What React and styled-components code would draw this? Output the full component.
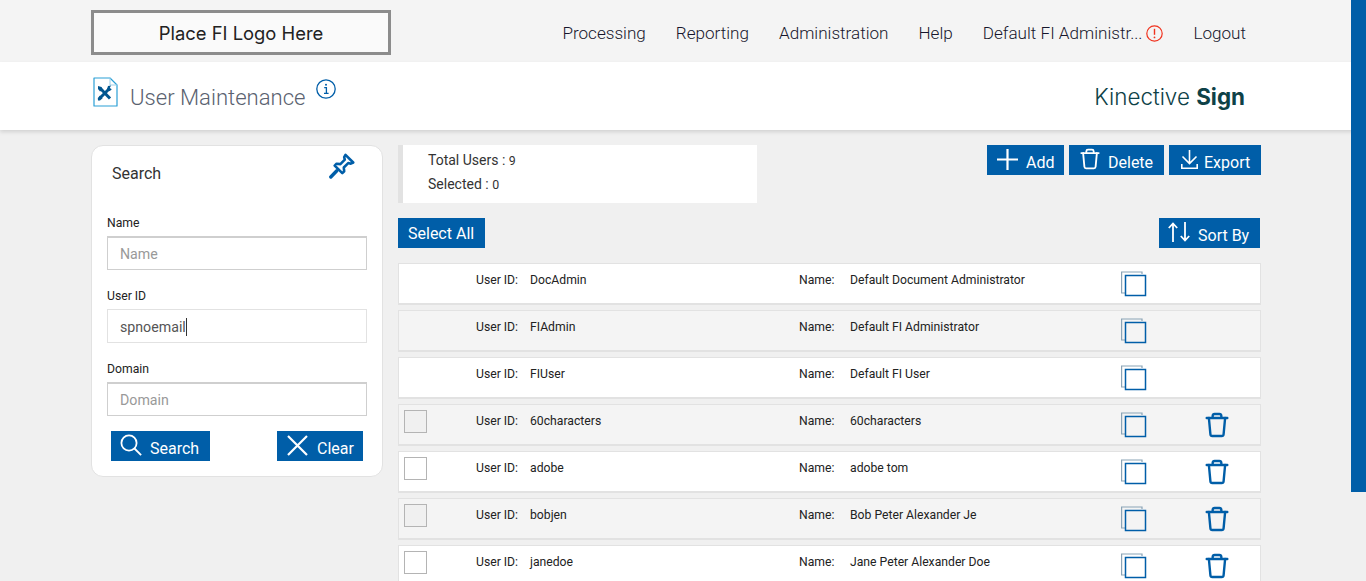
import React from 'react'
import styled, { createGlobalStyle } from 'styled-components'

const BLUE = '#005ea8'

const GlobalStyle = createGlobalStyle`
    html, body {
        margin: 0;
        height: 581px;
        overflow: hidden;
        background: #f0f0f0;
        font-family: Roboto, "Liberation Sans", sans-serif;
    }
    * { box-sizing: border-box; }
`

const users = [
    { id: 'DocAdmin', name: 'Default Document Administrator', system: true },
    { id: 'FIAdmin', name: 'Default FI Administrator', system: true },
    { id: 'FIUser', name: 'Default FI User', system: true },
    { id: '60characters', name: '60characters' },
    { id: 'adobe', name: 'adobe tom' },
    { id: 'bobjen', name: 'Bob Peter Alexander Je' },
    { id: 'janedoe', name: 'Jane Peter Alexander Doe' },
]

const TrashIcon = ({ size = 24, color = BLUE, width = 2.2 }) => (
    <svg width={size} height={size} viewBox="0 0 24 24" fill="none" stroke={color} strokeWidth={width} strokeLinecap="round" strokeLinejoin="round">
        <path d="M2.5 5.5h19" />
        <path d="M8 5V3.5A1.8 1.8 0 0 1 9.8 1.8h4.4A1.8 1.8 0 0 1 16 3.5V5" />
        <path d="M4.5 5.5l1.4 15a1.8 1.8 0 0 0 1.8 1.7h8.6a1.8 1.8 0 0 0 1.8-1.7l1.4-15" />
    </svg>
)

const CopyIcon = () => (
    <svg width="26" height="27" viewBox="0 0 26 27" fill="none">
        <path d="M21 4V2H.6v21H4" stroke="#8aa3b6" strokeWidth="1.2" />
        <rect x="4.5" y="5.5" width="20" height="20" stroke={BLUE} strokeWidth="1.5" />
    </svg>
)

const DocIcon = () => (
    <svg width="25" height="30" viewBox="0 0 25 30" fill="none">
        <path d="M1 1h16l7 7v21H1z" stroke="#2a9fd6" strokeWidth="1.2" strokeLinejoin="round" />
        <path d="M17 1v7h7" stroke="#9ccfe8" strokeWidth="1" />
        <path d="M7 11l10 10.5" stroke="#00558f" strokeWidth="3" />
        <path d="M16 12L7 21" stroke="#00558f" strokeWidth="3" />
        <path d="M5 9l3.5 1 1 3-2.5 1.5L5 12z" fill="#00558f" />
        <path d="M14 12l1-3 3-.5-1.2 2.4 2 1.4-2.2 2z" fill="#00558f" />
        <path d="M4.8 21l2.2-2.4 2.6 2.6L7 23.6H5z" fill="#00558f" />
    </svg>
)

const InfoIcon = () => (
    <svg width="20" height="20" viewBox="0 0 20 20" fill="none">
        <circle cx="10" cy="10" r="9.2" stroke={BLUE} strokeWidth="1.3" />
        <circle cx="10" cy="5.8" r="1" fill={BLUE} />
        <path d="M8.2 8.6H10.4V14M8 14.3h4.6" stroke={BLUE} strokeWidth="1.3" />
    </svg>
)

const AlertIcon = () => (
    <svg width="17" height="17" viewBox="0 0 17 17" fill="none">
        <circle cx="8.5" cy="8.5" r="7.7" stroke="#f0321e" strokeWidth="1.2" />
        <path d="M8.5 3.8v6" stroke="#f0321e" strokeWidth="1.4" />
        <circle cx="8.5" cy="12.4" r="0.9" fill="#f0321e" />
    </svg>
)

const PinIcon = () => (
    <svg width="26" height="26" viewBox="0 0 26 26" fill="none" stroke={BLUE} strokeWidth="2.6" strokeLinejoin="round" strokeLinecap="round">
        <path d="M16.5 1.8l7.7 7.7-2.4 1.2-2.6-.6-4.4 4.4.4 3.8-1.9 1.9-7.6-7.6 1.9-1.9 3.8.4 4.4-4.4-.6-2.6z" />
        <path d="M7.8 17.8L1.8 24" strokeWidth="3.4" />
    </svg>
)

const SearchIcon = () => (
    <svg width="22" height="22" viewBox="0 0 22 22" fill="none" stroke="#fff" strokeWidth="1.8">
        <circle cx="9" cy="9" r="7.6" />
        <path d="M14.5 14.5l6.6 6.6" />
    </svg>
)

const ClearIcon = () => (
    <svg width="21" height="21" viewBox="0 0 21 21" fill="none" stroke="#fff" strokeWidth="2.2">
        <path d="M1 1l19 19M20 1L1 20" />
    </svg>
)

const PlusIcon = () => (
    <svg width="21" height="21" viewBox="0 0 21 21" fill="none" stroke="#fff" strokeWidth="2.2">
        <path d="M10.5 0v21M0 10.5h21" />
    </svg>
)

const ExportIcon = () => (
    <svg width="17" height="19" viewBox="0 0 17 19" fill="none" stroke="#fff" strokeWidth="1.6">
        <path d="M8.5 0v13M1.5 6.5l7 7 7-7M.8 14v4.2h15.4V14" />
    </svg>
)

const SortIcon = () => (
    <svg width="22" height="20" viewBox="0 0 22 20" fill="none" stroke="#fff" strokeWidth="1.8">
        <path d="M5 20V1.5M.8 6l4.2-4.5L9.2 6M17 0v18.5M12.8 14l4.2 4.5 4.2-4.5" />
    </svg>
)

const App = () => {
    return (
        <Page>
            <GlobalStyle />
            <TopBar>
                <LogoBox>Place FI Logo Here</LogoBox>
                <Nav>
                    <NavItem>Processing</NavItem>
                    <NavItem>Reporting</NavItem>
                    <NavItem>Administration</NavItem>
                    <NavItem>Help</NavItem>
                    <UserItem>Default FI Administr... <AlertIcon /></UserItem>
                    <NavItem>Logout</NavItem>
                </Nav>
            </TopBar>
            <TitleBar>
                <TitleGroup>
                    <DocIcon />
                    <Title>User Maintenance</Title>
                    <InfoWrap><InfoIcon /></InfoWrap>
                </TitleGroup>
                <Brand>Kinective <b>Sign</b></Brand>
            </TitleBar>
            <Content>
                <SearchCard>
                    <CardHead>
                        <CardTitle>Search</CardTitle>
                        <PinIcon />
                    </CardHead>
                    <Field>
                        <FieldLabel>Name</FieldLabel>
                        <FieldBox>
                            <Placeholder>Name</Placeholder>
                        </FieldBox>
                    </Field>
                    <Field>
                        <FieldLabel>User ID</FieldLabel>
                        <FieldBox $active>
                            spnoemail<Caret />
                        </FieldBox>
                    </Field>
                    <Field>
                        <FieldLabel>Domain</FieldLabel>
                        <FieldBox>
                            <Placeholder>Domain</Placeholder>
                        </FieldBox>
                    </Field>
                    <CardActions>
                        <ActionButton $w={99} $gap={8} $pad={9}><SearchIcon /><ButtonText>Search</ButtonText></ActionButton>
                        <ActionButton $w={86} $gap={9} $pad={10}><ClearIcon /><ButtonText>Clear</ButtonText></ActionButton>
                    </CardActions>
                </SearchCard>
                <Main>
                    <SummaryRow>
                        <Summary>
                            <SummaryLine>Total Users : <small>9</small></SummaryLine>
                            <SummaryLine>Selected : <small>0</small></SummaryLine>
                        </Summary>
                        <Toolbar>
                            <ActionButton $w={77} $gap={8} $pad={10}><PlusIcon /><ButtonText>Add</ButtonText></ActionButton>
                            <ActionButton $w={95} $gap={7} $pad={10}><TrashIcon size={22} color="#fff" width={2} /><ButtonText>Delete</ButtonText></ActionButton>
                            <ActionButton $w={92} $gap={6} $pad={12}><ExportIcon /><ButtonText>Export</ButtonText></ActionButton>
                        </Toolbar>
                    </SummaryRow>
                    <SelectRow>
                        <ActionButton $w={87} $pad={10}><ButtonText $drop={0}>Select All</ButtonText></ActionButton>
                        <ActionButton $w={101} $gap={8} $pad={9}><SortIcon /><ButtonText>Sort By</ButtonText></ActionButton>
                    </SelectRow>
                    <List>
                        {users.map((user, i) => (
                            <UserRow key={user.id} $odd={i % 2 === 1}>
                                <CheckCell>{!user.system && <CheckBox $odd={i % 2 === 1} />}</CheckCell>
                                <RowText>User ID:</RowText>
                                <RowText>{user.id}</RowText>
                                <RowText>Name:</RowText>
                                <RowText>{user.name}</RowText>
                                <CopyCell><CopyIcon /></CopyCell>
                                <TrashCell>{!user.system && <TrashIcon size={26} />}</TrashCell>
                            </UserRow>
                        ))}
                    </List>
                </Main>
            </Content>
            <SideStrip />
        </Page>
    )
}

export default App

const Page = styled.div`
    position: relative;
    height: 581px;
    overflow: hidden;
`

const TopBar = styled.header`
    height: 62px;
    background: #f4f4f4;
    padding: 10px 120px 0 91px;
    display: flex;
    justify-content: space-between;
`

const LogoBox = styled.div`
    width: 300px;
    height: 45px;
    border: 3px solid #8c8c8c;
    background: #fafafa;
    color: #222;
    font-family: Inter, sans-serif;
    font-size: 18.4px;
    line-height: 40px;
    text-align: center;
`

const Nav = styled.nav`
    display: flex;
    align-items: center;
    gap: 30px;
    height: 46px;
`

const NavItem = styled.span`
    font-size: 17.1px;
    font-weight: 300;
    color: #16162c;
    white-space: nowrap;
`

const UserItem = styled(NavItem)`
    display: flex;
    align-items: center;
    gap: 4px;
`

const TitleBar = styled.div`
    height: 68px;
    background: #fff;
    box-shadow: 0 2px 4px rgba(0, 0, 0, 0.13);
    padding: 15px 121px 0 93px;
    display: flex;
    justify-content: space-between;
    position: relative;
`

const TitleGroup = styled.div`
    display: flex;
    align-items: flex-start;
`

const Title = styled.h1`
    margin: 6px 0 0 12px;
    font-size: 22.1px;
    font-weight: 300;
    color: #5a6270;
    line-height: 28px;
`

const InfoWrap = styled.span`
    margin: 2px 0 0 10px;
`

const Brand = styled.div`
    margin-top: 5px;
    font-family: Inter, sans-serif;
    font-size: 22.4px;
    font-weight: 300;
    color: #0e4147;
    line-height: 30px;
    b { font-weight: 700; }
`

const Content = styled.div`
    display: flex;
    align-items: flex-start;
    gap: 15px;
    padding: 15px 0 0 91px;
`

const SearchCard = styled.aside`
    width: 292px;
    height: 332px;
    background: #fff;
    border: 1px solid #e2e2e2;
    border-radius: 12px;
    padding: 0 15px;
    flex-shrink: 0;
`

const CardHead = styled.div`
    display: flex;
    justify-content: space-between;
    align-items: flex-start;
    height: 67px;
    padding: 7px 12px 0 5px;
`

const CardTitle = styled.div`
    font-size: 16px;
    color: #333;
    line-height: 42px;
`

const Field = styled.div`
    margin-bottom: 16px;
`

const FieldLabel = styled.div`
    font-size: 12.2px;
    color: #222;
    line-height: 20px;
    height: 23px;
`

const FieldBox = styled.div`
    height: 34px;
    width: 260px;
    border: 1px solid ${({ $active }) => ($active ? '#e2e2e2' : '#cfcfcf')};
    border-top-width: ${({ $active }) => ($active ? '1px' : '2px')};
    padding: ${({ $active }) => ($active ? '2px' : '0')} 0 0 12px;
    font-size: 14.2px;
    color: #555;
    display: flex;
    align-items: center;
`

const Placeholder = styled.span`
    color: #999;
`

const Caret = styled.span`
    width: 1px;
    height: 18px;
    background: #333;
`

const CardActions = styled.div`
    display: flex;
    justify-content: space-between;
    padding: 0 4px;
    margin-top: -1px;
`

const ActionButton = styled.div`
    width: ${({ $w }) => $w}px;
    height: 30px;
    background: ${BLUE};
    color: #fff;
    font-size: 16px;
    display: flex;
    align-items: center;
    gap: ${({ $gap }) => $gap || 0}px;
    padding-left: ${({ $pad }) => $pad}px;
    white-space: nowrap;
    flex-shrink: 0;
    svg { flex-shrink: 0; margin-top: -2px; }
`

const ButtonText = styled.span`
    padding-top: ${({ $drop }) => $drop ?? 4}px;
`

const Main = styled.main`
    width: 863px;
`

const SummaryRow = styled.div`
    display: flex;
    justify-content: space-between;
    align-items: flex-start;
    height: 58px;
`

const Summary = styled.div`
    width: 359px;
    height: 58px;
    background: #fff;
    border-left: 5px solid #e2e2e2;
    padding: 3px 0 0 25px;
`

const SummaryLine = styled.div`
    font-size: 14px;
    height: 24px;
    line-height: 24px;
    color: #333;
    small { font-size: 12.4px; }
`

const Toolbar = styled.div`
    display: flex;
    gap: 5px;
`

const SelectRow = styled.div`
    display: flex;
    justify-content: space-between;
    padding-right: 1px;
    margin-top: 15px;
`

const List = styled.div`
    display: flex;
    flex-direction: column;
    gap: 5px;
    margin-top: 15px;
`

const UserRow = styled.div`
    height: 42px;
    flex-shrink: 0;
    background: ${({ $odd }) => ($odd ? '#f4f4f4' : '#fff')};
    border: 1px solid #e2e2e2;
    border-bottom-width: 2px;
    display: grid;
    grid-template-columns: 77px 54px 269px 51px 271px 83px 50px;
    font-size: 12.2px;
    line-height: 16px;
    color: #222;
`

const CheckCell = styled.div`
    padding: 5px 0 0 5px;
`

const CheckBox = styled.div`
    width: 23px;
    height: 23px;
    background: ${({ $odd }) => ($odd ? '#f0f0f0' : '#fff')};
    border: 1px solid #b4b4b4;
`

const RowText = styled.div`
    padding-top: 8px;
    white-space: nowrap;
`

const CopyCell = styled.div`
    padding-top: 6px;
`

const TrashCell = styled.div`
    padding-top: 7px;
`

const SideStrip = styled.div`
    position: absolute;
    top: 0;
    right: 0;
    width: 15px;
    height: 492px;
    background: ${BLUE};
`
